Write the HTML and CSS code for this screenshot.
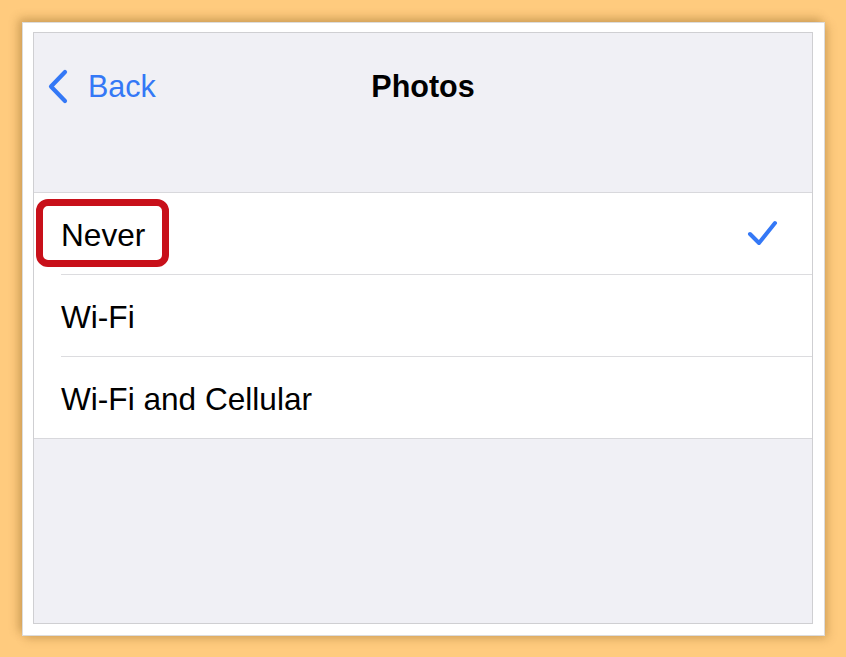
FILE: index.html
```html
<!DOCTYPE html>
<html>
<head>
<meta charset="utf-8">
<link rel="stylesheet" href="styles.css">
</head>
<body>
<div class="frame">
  <div class="screen">
    <div class="navbar">
      <div class="back">
        <svg class="chevron" width="24" height="36" viewBox="0 0 24 36"><path d="M19 3 L5 17.5 L19 32" fill="none" stroke="#3478f6" stroke-width="4.2" stroke-linecap="round" stroke-linejoin="round"/></svg>
        <span class="back-label">Back</span>
      </div>
      <div class="title">Photos</div>
    </div>
    <div class="list">
      <div class="row">
        <div class="row-inner">
          <span class="label highlighted">Never</span>
          <svg class="check" width="32" height="30" viewBox="0 0 32 30"><path d="M3 15 L12 24 L28 4" fill="none" stroke="#3478f6" stroke-width="4" stroke-linecap="round" stroke-linejoin="round"/></svg>
        </div>
      </div>
      <div class="row">
        <div class="row-inner"><span class="label">Wi-Fi</span></div>
      </div>
      <div class="row">
        <div class="row-inner last"><span class="label">Wi-Fi and Cellular</span></div>
      </div>
    </div>
  </div>
</div>
</body>
</html>
```
FILE: styles.css
```css
html, body {
  margin: 0;
  padding: 0;
}
body {
  background: #ffcb7e;
  width: 846px;
  height: 657px;
  padding: 22px 0 0 22px;
  box-sizing: border-box;
  font-family: "Liberation Sans", Arial, sans-serif;
}
.frame {
  width: 803px;
  height: 614px;
  box-sizing: border-box;
  background: #ffffff;
  border: 1px solid #dcdcdc;
  padding: 9px 11px 11px 10px;
  box-shadow: -4px -4px 9px rgba(120, 80, 20, 0.3), 3px 3px 9px rgba(120, 80, 20, 0.26);
}
.screen {
  width: 780px;
  height: 592px;
  box-sizing: border-box;
  border: 1px solid #cfcfd2;
  background: #f0f0f5;
  display: flex;
  flex-direction: column;
}
.navbar {
  height: 107px;
  display: grid;
  grid-template-columns: 1fr auto 1fr;
  align-items: center;
  margin-bottom: 52px;
}
.back {
  display: flex;
  align-items: center;
  padding-left: 12px;
  color: #3478f6;
}
.chevron {
  display: block;
}
.back-label {
  font-size: 30.5px;
  margin-left: 18px;
  line-height: 1;
}
.title {
  font-size: 30.5px;
  font-weight: bold;
  color: #000;
  line-height: 1;
}
.list {
  background: #ffffff;
  border-top: 1px solid #d8d8dc;
  border-bottom: 1px solid #d8d8dc;
}
.row {
  padding-left: 27px;
}
.row-inner {
  height: 77px;
  padding-top: 4px;
  border-bottom: 1px solid #dcdcdf;
  display: flex;
  align-items: center;
  justify-content: space-between;
  padding-right: 33px;
}
.row-inner.last {
  border-bottom: none;
}
.check {
  display: block;
  margin-top: -4px;
}
.label {
  font-size: 31.6px;
  color: #000;
  line-height: 1;
}
.highlighted {
  position: relative;
}
.highlighted::before {
  content: "";
  position: absolute;
  left: -25px;
  top: -35px;
  width: 133px;
  height: 68px;
  box-sizing: border-box;
  border: 7px solid #c8101a;
  border-radius: 12px;
  transform: translateY(14px);
}
```
